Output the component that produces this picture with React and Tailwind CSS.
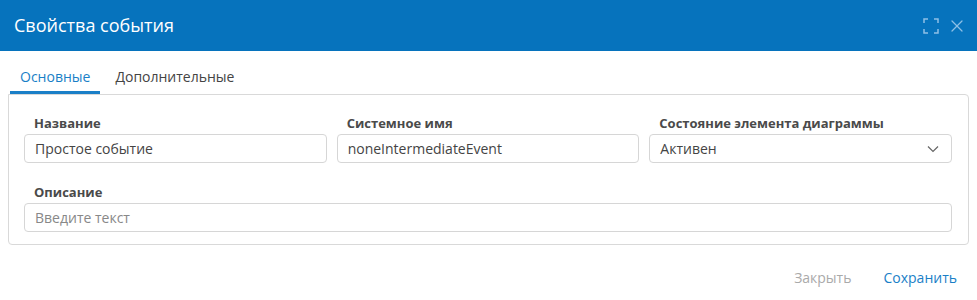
import { X } from "lucide-react";

const fields = [
  { label: "Название", value: "Простое событие" },
  { label: "Системное имя", value: "noneIntermediateEvent" },
];

function ExpandIcon() {
  return (
    <svg width="16" height="16" viewBox="0 0 16 16" fill="none" stroke="currentColor" strokeWidth="1.5">
      <path d="M1 5V1h4M11 1h4v4M15 11v4h-4M5 15H1v-4" />
    </svg>
  );
}

export default function App() {
  return (
    <div className="h-[300px] w-[977px] bg-white font-['Open_Sans',sans-serif] text-[#333]">
      <div className="flex h-[51px] items-center justify-between bg-[#0673bd] pl-[14px] pr-[10px]">
        <h1 className="text-[18px] font-normal text-white">Свойства события</h1>
        <div className="flex items-center gap-[8px] text-[#8ec0e6]">
          <ExpandIcon />
          <X size={20} strokeWidth={1.5} />
        </div>
      </div>

      <div className="px-[8px] pt-[15px]">
        <div className="flex text-[14px]">
          <div className="ml-[2px] border-b-[3px] border-[#1a7fc7] px-[10px] pb-[4px] text-[#1a7fc7]">Основные</div>
          <div className="px-[15px] pb-[4px] text-[#444]">Дополнительные</div>
        </div>

        <div className="rounded-b-[4px] rounded-tr-[4px] border border-[#d9d9d9] pl-[15px] pr-[16px] pt-[19px] pb-[12px]">
          <div className="grid grid-cols-3 gap-x-[10px]">
            {fields.map((f) => (
              <div key={f.label}>
                <div className="pl-[10px] text-[13px] font-bold leading-[18px] text-[#4a4a4a]">{f.label}</div>
                <div className="mt-[2px] flex h-[29px] items-center rounded-[4px] border border-[#d6d6d6] px-[10px] text-[14px] text-[#444]">
                  {f.value}
                </div>
              </div>
            ))}
            <div>
              <div className="pl-[10px] text-[13px] font-bold leading-[18px] text-[#4a4a4a]">Состояние элемента диаграммы</div>
              <div className="mt-[2px] flex h-[29px] items-center justify-between rounded-[4px] border border-[#d6d6d6] pl-[10px] pr-[12px] text-[14px] text-[#444]">
                <span>Активен</span>
                <svg width="12" height="8" viewBox="0 0 12 8" fill="none" stroke="#666" strokeWidth="1.2">
                  <path d="M1 1.5l5 5 5-5" />
                </svg>
              </div>
            </div>
          </div>

          <div className="mt-[20px]">
            <div className="pl-[10px] text-[13px] font-bold leading-[18px] text-[#4a4a4a]">Описание</div>
            <div className="mt-[2px] flex h-[29px] items-center rounded-[4px] border border-[#d6d6d6] px-[10px] text-[14px] text-[#888]">
              Введите текст
            </div>
          </div>
        </div>
      </div>

      <div className="flex justify-end gap-[32px] pr-[20px] pt-[22px] text-[14px]">
        <span className="text-[#aaa]">Закрыть</span>
        <span className="text-[#1a7fc7]">Сохранить</span>
      </div>
    </div>
  );
}
